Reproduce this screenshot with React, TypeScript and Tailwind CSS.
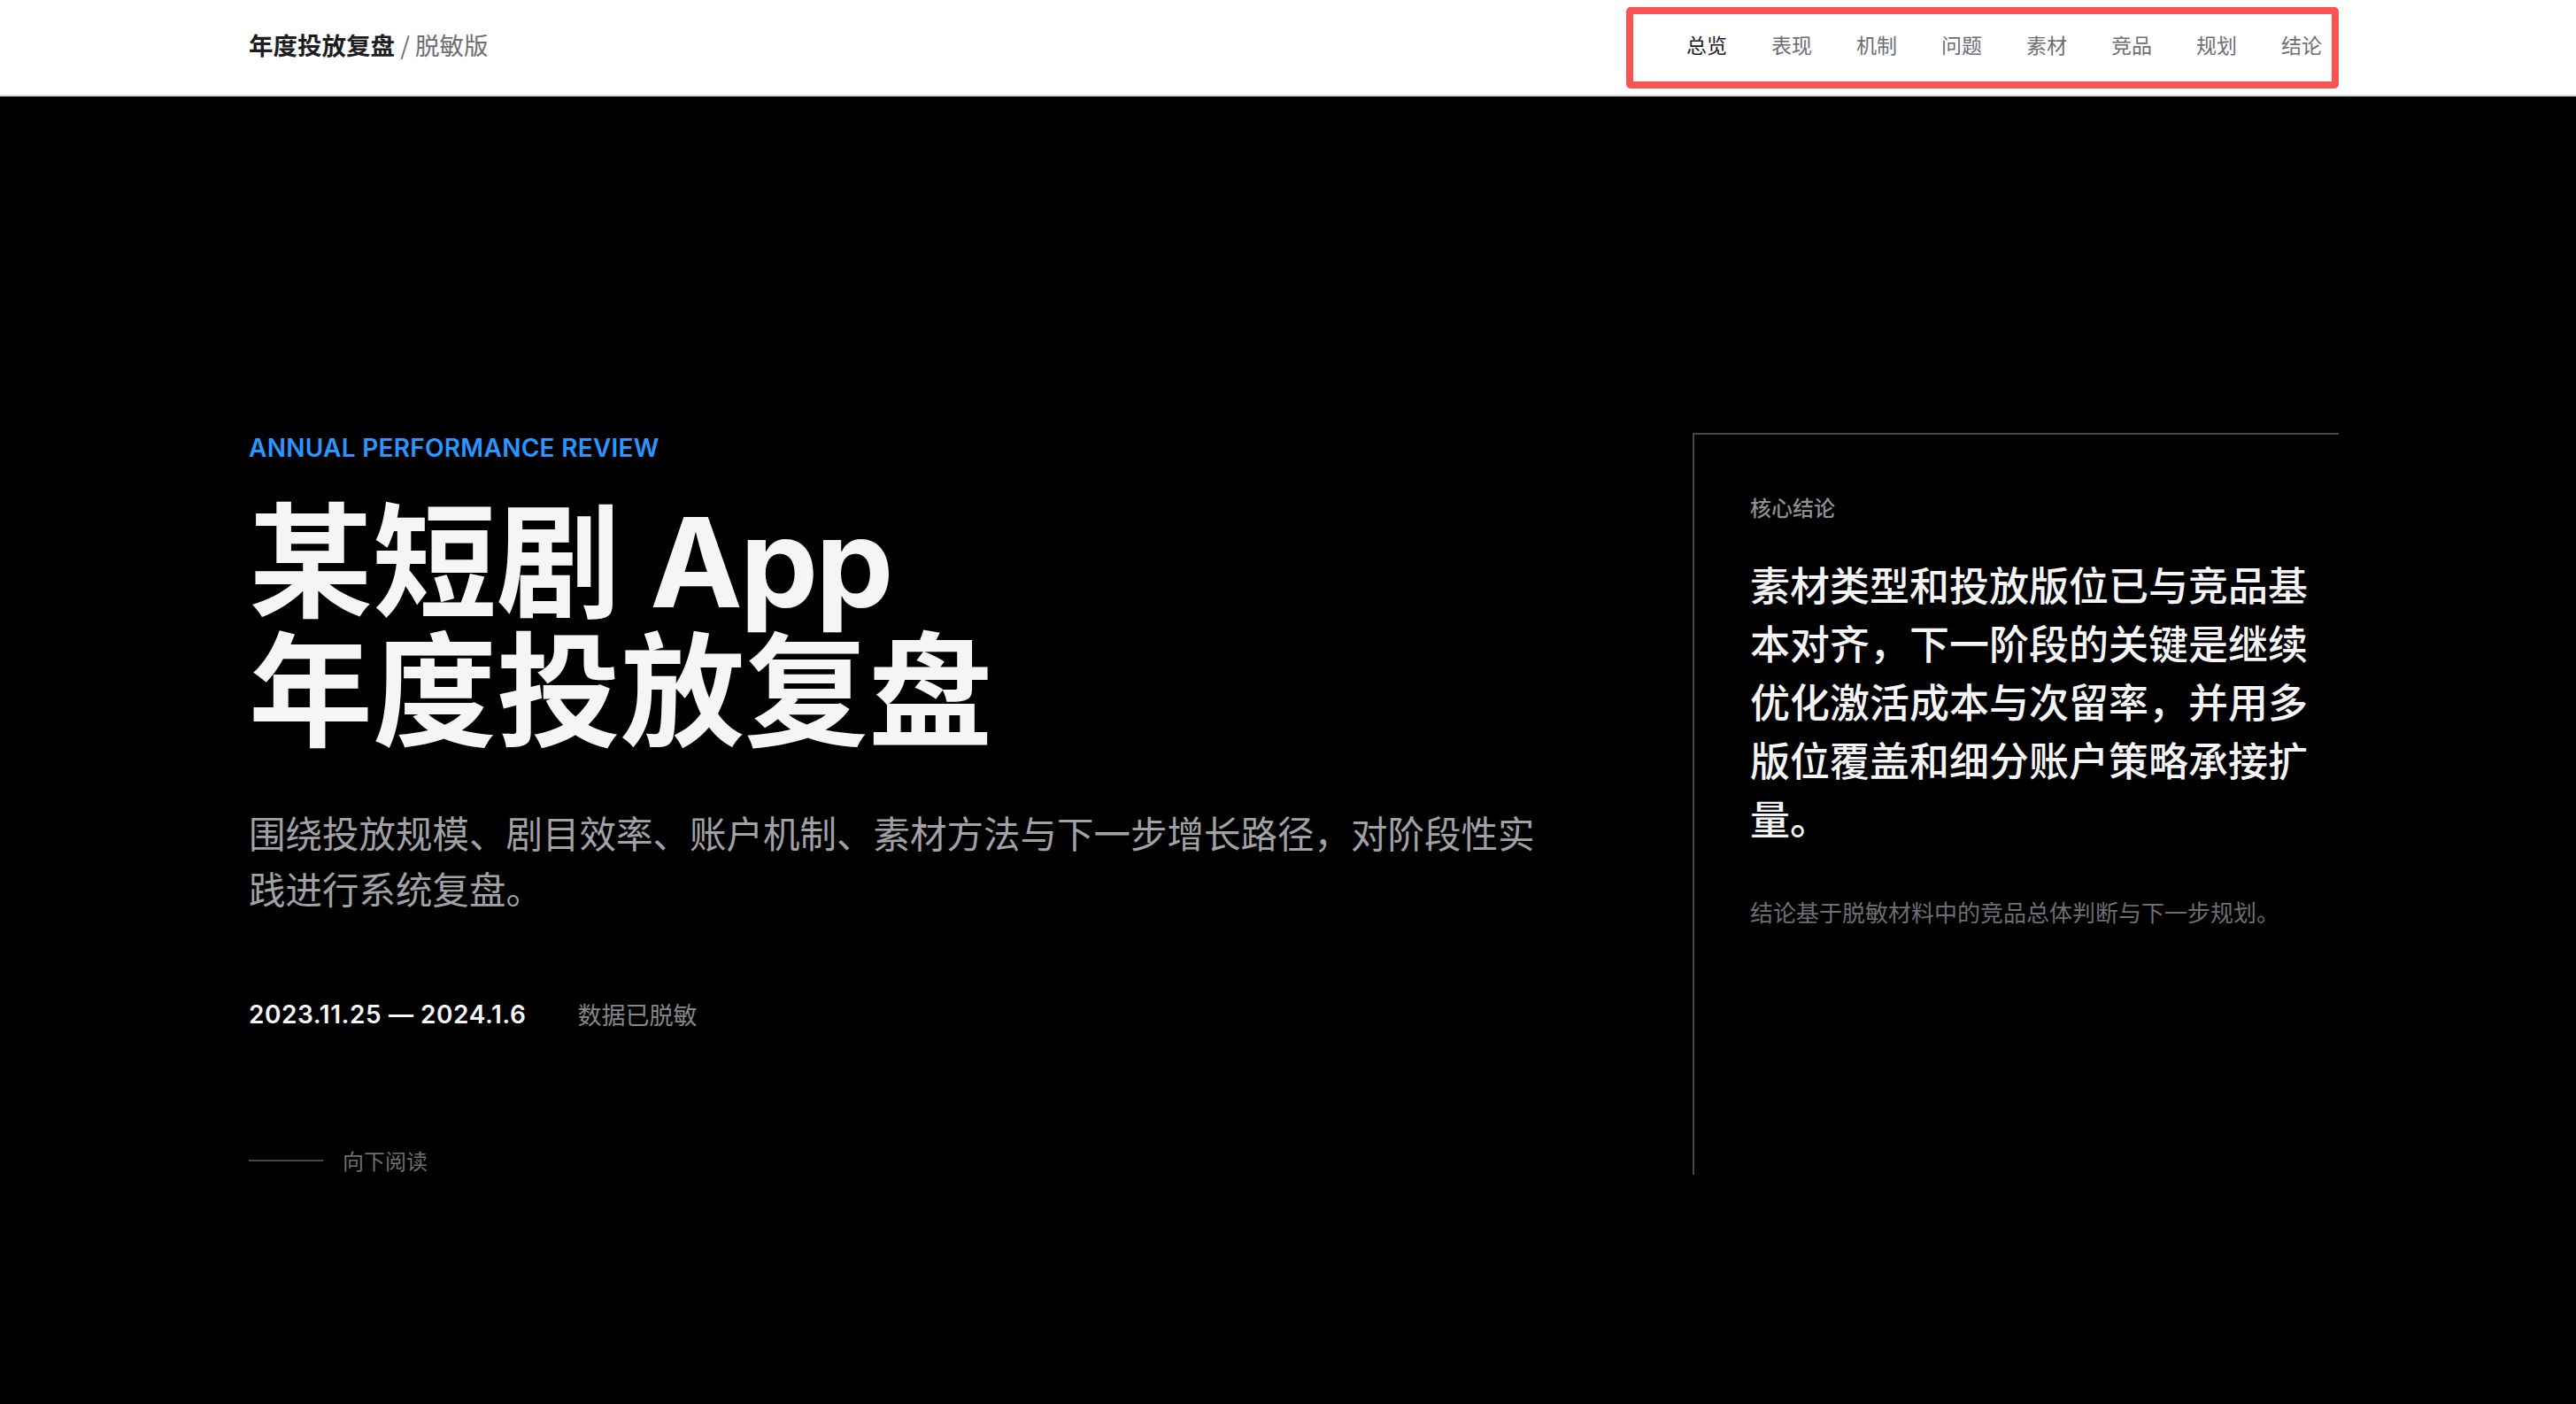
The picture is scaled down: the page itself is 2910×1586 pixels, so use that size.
import React from 'react';

const navItems = ['总览', '表现', '机制', '问题', '素材', '竞品', '规划', '结论'];

const Header: React.FC = () => {
  return (
    <header className="h-[109px] bg-white border-b-2 border-[#d8d8da] flex items-center justify-between pl-[281px] pr-[268px]">
      <div className="text-[27.5px] leading-[36px] font-['Noto_Sans_CJK_SC',sans-serif] mb-[8px]">
        <span className="font-bold text-[#1d1d1f]">年度投放复盘</span>
        <span className="text-[#6e6e73]"> / 脱敏版</span>
      </div>

      {/* nav, outlined in red */}
      <nav className="h-[92px] border-[8px] border-[#f95454] rounded-[5px] flex items-center gap-[50px] pl-[60px] pr-[11px]">
        {navItems.map((item, i) => (
          <a
            key={item}
            href="#"
            className={`mb-[8px] text-[23px] leading-[32px] font-['Noto_Sans_CJK_SC',sans-serif] ${i === 0 ? 'text-[#1d1d1f]' : 'text-[#6e6e73]'}`}
          >
            {item}
          </a>
        ))}
      </nav>
    </header>
  );
};

const Hero: React.FC = () => {
  return (
    <main className="bg-black min-h-[1477px] pt-[380px] pb-[200px] pl-[281px] pr-[268px]">
      <div className="flex">
        {/* Left column */}
        <div className="flex-1 flex flex-col">
          <p className="text-[28px] leading-[34px] font-semibold tracking-[0.01em] text-[#2997ff] font-['Inter',sans-serif]">
            ANNUAL PERFORMANCE REVIEW
          </p>

          <h1 className="mt-[39px] text-[140px] font-bold text-[#f5f5f7] font-['Inter','Noto_Sans_CJK_SC',sans-serif]">
            <div className="h-[146px] leading-[146px]">
              某短剧 <span className="tracking-[-0.02em]">App</span>
            </div>
            <div className="h-[146px] leading-[146px]">年度投放复盘</div>
          </h1>

          <p className="mt-[55px] max-w-[1470px] text-[41.5px] leading-[63px] text-[#a1a1a6] font-['Noto_Sans_CJK_SC',sans-serif]">
            围绕投放规模、剧目效率、账户机制、素材方法与下一步增长路径，对阶段性实践进行系统复盘。
          </p>

          <div className="mt-[94px] flex items-center gap-[58px]">
            <span className="text-[28px] leading-[34px] font-semibold tracking-[0.02em] text-[#f5f5f7] font-['Inter',sans-serif]">
              2023.11.25 — 2024.1.6
            </span>
            <span className="text-[27px] leading-[34px] text-[#86868b] font-['Noto_Sans_CJK_SC',sans-serif]">
              数据已脱敏
            </span>
          </div>

          <div className="mt-[132px] flex items-center gap-[22px]">
            <div className="w-[84px] h-[2px] bg-[#48484a]" />
            <span className="text-[24px] leading-[32px] text-[#6e6e73] font-['Noto_Sans_CJK_SC',sans-serif]">
              向下阅读
            </span>
          </div>
        </div>

        {/* Right panel */}
        <aside className="w-[730px] border-t-2 border-l-2 border-[#48484a] pl-[63px] pr-[24px] pt-[66px] font-['Noto_Sans_CJK_SC',sans-serif]">
          <p className="text-[24px] leading-[32px] font-medium text-[#8e8e93]">核心结论</p>
          <p className="mt-[38px] text-[45px] leading-[66px] font-medium text-[#f5f5f7]">
            素材类型和投放版位已与竞品基本对齐，下一阶段的关键是继续优化激活成本与次留率，并用多版位覆盖和细分账户策略承接扩量。
          </p>
          <p className="mt-[55px] text-[26px] leading-[36px] text-[#6e6e73]">
            结论基于脱敏材料中的竞品总体判断与下一步规划。
          </p>
        </aside>
      </div>
    </main>
  );
};

export default function App() {
  return (
    <div className="min-h-screen bg-black">
      <Header />
      <Hero />
    </div>
  );
}
